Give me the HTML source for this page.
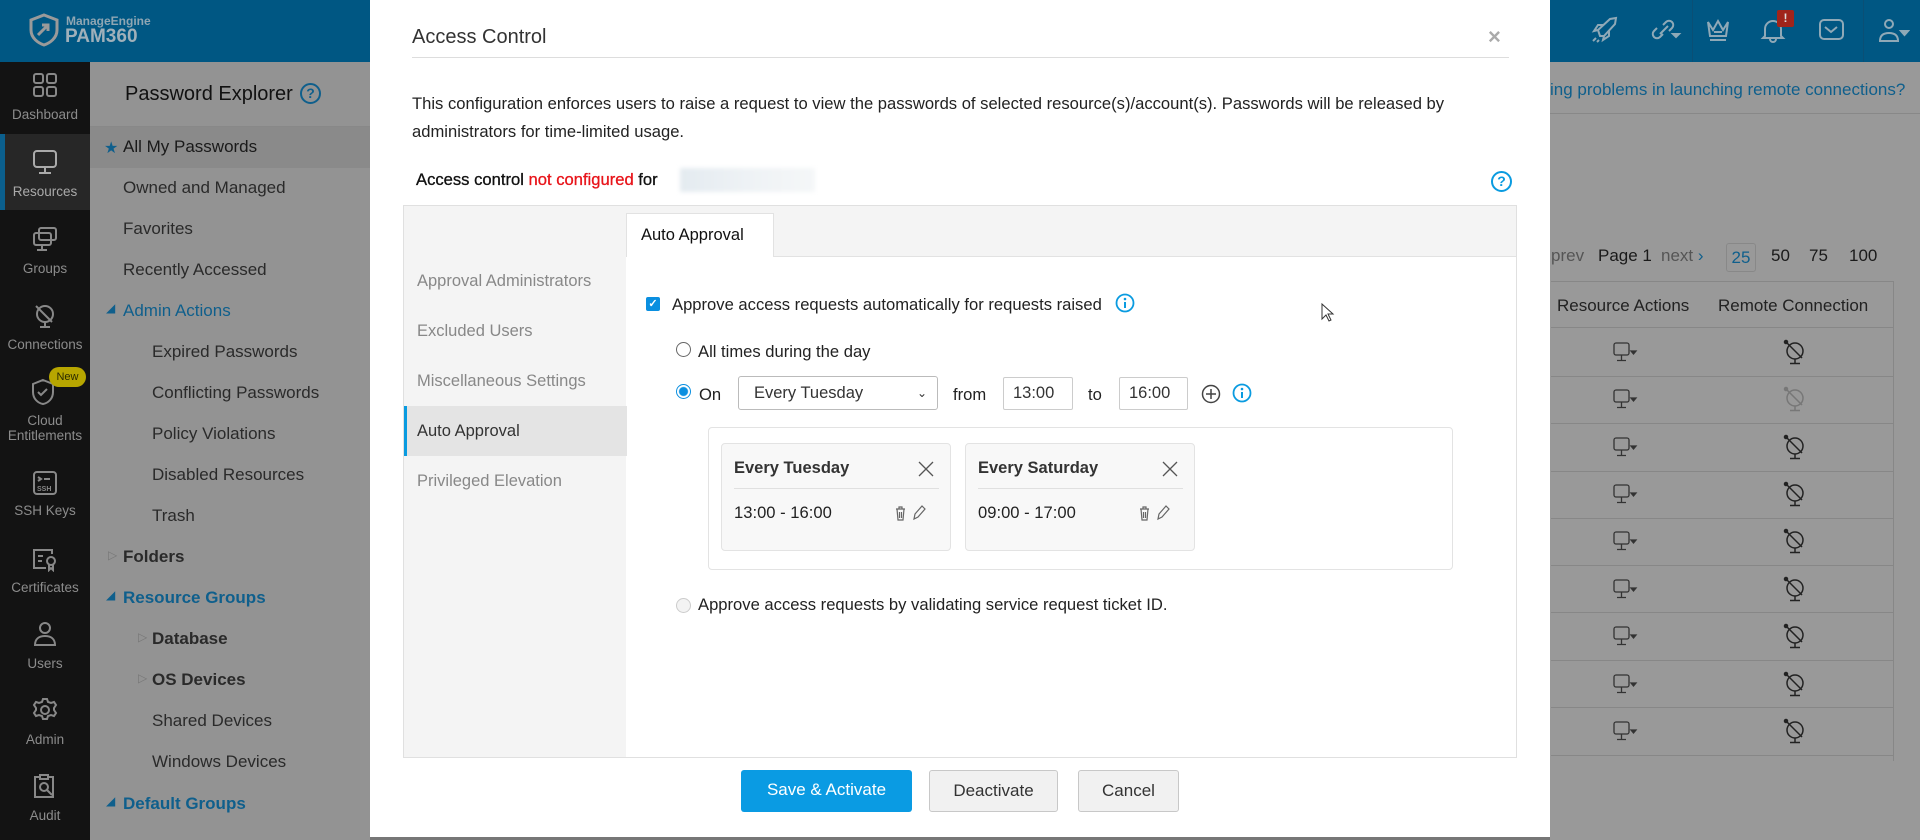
<!DOCTYPE html>
<html><head><meta charset="utf-8"><style>
*{box-sizing:border-box;margin:0;padding:0}
body{width:1920px;height:840px;overflow:hidden;position:relative;font-family:"Liberation Sans",sans-serif;background:#999}
.a{position:absolute;white-space:nowrap}
.hdr{left:0;top:0;width:1920px;height:62px;background:#005783}
.side{left:0;top:62px;width:90px;height:778px;background:#131313}
.si{position:absolute;left:0;width:90px;text-align:center;color:#8c8c8c;font-size:13.5px}
.exp{left:90px;top:62px;width:280px;height:778px;background:#939393}
.li{position:absolute;font-size:17px;color:#2a2a2a}
.bl{color:#0f5f8c}
.modal{left:370px;top:0;width:1180px;height:840px;background:#fff}
.t{color:#222;font-size:16.6px}
.nav{position:absolute;left:0;width:223px;padding-left:13px;font-size:16.5px;color:#888;height:50px;line-height:50px}
.card{position:absolute;top:443px;width:230px;height:108px;background:#f8f8f8;border:1px solid #e3e3e3;border-radius:4px}
.btn{position:absolute;top:770px;height:42px;line-height:40px;text-align:center;font-size:17px;border-radius:3px}
.row{position:absolute;left:1551px;width:343px;height:1px;background:#878787}
</style></head><body>
<div class="a hdr"></div>
<svg class="a" style="left:28px;top:13px" width="32" height="34" viewBox="0 0 32 34"><path d="M16 2 L29 7 V17 C29 25 22 30 16 32 C10 30 3 25 3 17 V7 Z" fill="none" stroke="#9a9a9a" stroke-width="3"/><path d="M10 22 L20 12 M14 12 H20 V18" fill="none" stroke="#9a9a9a" stroke-width="3"/></svg>
<div class="a" style="left:66px;top:14px;color:#8fa6b3;font-size:12px;font-weight:bold">ManageEngine</div>
<div class="a" style="left:65px;top:26px;color:#9fb0ba;font-size:19px;font-weight:bold">PAM360</div>
<div class="a side"></div>
<div class="a" style="left:0;top:134px;width:90px;height:76px;background:#272727;border-left:5px solid #0b5f8d"></div>
<div class="si" style="top:72px"><svg width="26" height="26" viewBox="0 0 26 26" fill="none" stroke="#888" stroke-width="2"><rect x="2" y="2" width="9" height="9" rx="2"/><rect x="15" y="2" width="9" height="9" rx="2"/><rect x="2" y="15" width="9" height="9" rx="2"/><rect x="15" y="15" width="9" height="9" rx="2"/></svg></div>
<div class="si" style="top:107px">Dashboard</div>
<div class="si" style="top:149px"><svg width="26" height="26" viewBox="0 0 26 26" fill="none" stroke="#aaa" stroke-width="2"><rect x="2" y="2" width="22" height="16" rx="3"/><path d="M13 18v5M7 24h12"/></svg></div>
<div class="si" style="top:184px;color:#aaa">Resources</div>
<div class="si" style="top:226px"><svg width="26" height="26" viewBox="0 0 26 26" fill="none" stroke="#888" stroke-width="2"><rect x="7" y="2" width="17" height="12" rx="2"/><rect x="2" y="7" width="17" height="12" rx="2"/><path d="M10 19v4M5 24h10"/></svg></div>
<div class="si" style="top:261px">Groups</div>
<div class="si" style="top:302px"><svg width="26" height="26" viewBox="0 0 26 26" fill="none" stroke="#888" stroke-width="2"><circle cx="13" cy="12" r="8"/><path d="M4 4l16 16M13 20v4M8 25h10"/></svg></div>
<div class="si" style="top:337px">Connections</div>
<div class="si" style="top:378px"><svg width="28" height="28" viewBox="0 0 28 28" fill="none" stroke="#888" stroke-width="2"><path d="M12 2L22 6v8c0 7-5 11-10 12C7 25 2 21 2 14V6z"/><path d="M7 14l3 3 6-6"/></svg></div>
<div class="a" style="left:49px;top:367px;width:37px;height:20px;border-radius:10px;background:#b7a600;color:#2a2a00;font-size:11px;text-align:center;line-height:20px">New</div>
<div class="si" style="top:413px;line-height:15px">Cloud<br>Entitlements</div>
<div class="si" style="top:470px"><svg width="26" height="26" viewBox="0 0 26 26" fill="none" stroke="#888" stroke-width="2"><rect x="2" y="2" width="22" height="22" rx="3"/><path d="M6 7l3 2-3 2M12 9h6"/><text x="5" y="21" font-size="7" fill="#888" stroke="none" font-family="Liberation Sans" font-weight="bold">SSH</text></svg></div>
<div class="si" style="top:503px">SSH Keys</div>
<div class="si" style="top:546px"><svg width="26" height="26" viewBox="0 0 26 26" fill="none" stroke="#888" stroke-width="2"><path d="M20 8V4H2v18h12"/><path d="M6 10h5M6 15h4"/><circle cx="19" cy="15" r="4"/><path d="M17 19v5l2-2 2 2v-5"/></svg></div>
<div class="si" style="top:580px">Certificates</div>
<div class="si" style="top:621px"><svg width="26" height="26" viewBox="0 0 26 26" fill="none" stroke="#888" stroke-width="2"><circle cx="13" cy="7" r="5"/><path d="M3 24c0-6 4-9 10-9s10 3 10 9z"/></svg></div>
<div class="si" style="top:656px">Users</div>
<div class="si" style="top:697px"><svg width="26" height="26" viewBox="0 0 26 26" fill="none" stroke="#888" stroke-width="2"><circle cx="13" cy="13" r="4"/><path d="M11 2h4l1 3 3 1 3-1 2 3-2 3v2l2 3-2 3-3-1-3 1-1 3h-4l-1-3-3-1-3 1-2-3 2-3v-2l-2-3 2-3 3 1 3-1z"/></svg></div>
<div class="si" style="top:732px">Admin</div>
<div class="si" style="top:773px"><svg width="26" height="26" viewBox="0 0 26 26" fill="none" stroke="#888" stroke-width="2"><path d="M8 4H3v20h18V4h-5"/><rect x="8" y="2" width="8" height="4"/><circle cx="12" cy="14" r="4"/><path d="M15 17l5 5"/></svg></div>
<div class="si" style="top:808px">Audit</div>

<div class="a exp"></div>
<div class="a" style="left:125px;top:83px;font-size:20px;color:#111">Password Explorer</div>
<div class="a" style="left:300px;top:83px;width:21px;height:21px;border:2px solid #0f5f8c;border-radius:50%;color:#0f5f8c;font-size:14px;text-align:center;line-height:17px;font-weight:bold">?</div>
<div class="a" style="left:90px;top:126px;width:280px;height:1px;background:#888"></div>
<div class="a" style="left:90px;top:127px;width:280px;height:41px;background:#8a8a8a"></div>
<div class="a" style="left:104px;top:138px;color:#0f5f8c;font-size:16px">&#x2605;</div>
<div class="li" style="left:123px;top:137px;color:#1a1a1a">All My Passwords</div>
<div class="li" style="left:123px;top:178px">Owned and Managed</div>
<div class="li" style="left:123px;top:219px">Favorites</div>
<div class="li" style="left:123px;top:260px">Recently Accessed</div>
<div class="li bl" style="left:106px;top:301px;font-size:12px">&#9698;</div>
<div class="li bl" style="left:123px;top:301px">Admin Actions</div>
<div class="li" style="left:152px;top:342px">Expired Passwords</div>
<div class="li" style="left:152px;top:383px">Conflicting Passwords</div>
<div class="li" style="left:152px;top:424px">Policy Violations</div>
<div class="li" style="left:152px;top:465px">Disabled Resources</div>
<div class="li" style="left:152px;top:506px">Trash</div>
<div class="li" style="left:108px;top:548px;color:#777;font-size:12px">&#9655;</div>
<div class="li" style="left:123px;top:547px;font-weight:bold">Folders</div>
<div class="li bl" style="left:106px;top:588px;font-size:12px">&#9698;</div>
<div class="li bl" style="left:123px;top:588px;font-weight:bold">Resource Groups</div>
<div class="li" style="left:138px;top:630px;color:#777;font-size:12px">&#9655;</div>
<div class="li" style="left:152px;top:629px;font-weight:bold">Database</div>
<div class="li" style="left:138px;top:671px;color:#777;font-size:12px">&#9655;</div>
<div class="li" style="left:152px;top:670px;font-weight:bold">OS Devices</div>
<div class="li" style="left:152px;top:711px">Shared Devices</div>
<div class="li" style="left:152px;top:752px">Windows Devices</div>
<div class="li bl" style="left:106px;top:794px;font-size:12px">&#9698;</div>
<div class="li bl" style="left:123px;top:794px;font-weight:bold">Default Groups</div>

<div class="a" style="left:1550px;top:80px;color:#0f5f8c;font-size:17px">ing problems in launching remote connections?</div>
<div class="a" style="left:1550px;top:113px;width:370px;height:1px;background:#888"></div>
<div class="a" style="left:1551px;top:246px;font-size:17px;color:#555">prev</div>
<div class="a" style="left:1598px;top:246px;font-size:17px;color:#1a1a1a">Page 1</div>
<div class="a" style="left:1661px;top:246px;font-size:17px;color:#555">next <span style="color:#0f5f8c">&#8250;</span></div>
<div class="a" style="left:1726px;top:243px;width:30px;height:29px;border:1px solid #888;border-radius:3px;color:#0f5f8c;font-size:17px;text-align:center;line-height:27px">25</div>
<div class="a" style="left:1771px;top:246px;font-size:17px;color:#1a1a1a">50</div>
<div class="a" style="left:1809px;top:246px;font-size:17px;color:#1a1a1a">75</div>
<div class="a" style="left:1849px;top:246px;font-size:17px;color:#1a1a1a">100</div>
<div class="row" style="top:281px"></div>
<div class="a" style="left:1893px;top:281px;width:1px;height:480px;background:#878787"></div>
<div class="a" style="left:1557px;top:296px;font-size:17px;color:#222">Resource Actions</div>
<div class="a" style="left:1718px;top:296px;font-size:17px;color:#222">Remote Connection</div>
<div class="row" style="top:327px"></div>
<div class="row" style="top:376px"></div>
<div class="row" style="top:423px"></div>
<div class="row" style="top:471px"></div>
<div class="row" style="top:518px"></div>
<div class="row" style="top:565px"></div>
<div class="row" style="top:612px"></div>
<div class="row" style="top:660px"></div>
<div class="row" style="top:707px"></div>
<div class="row" style="top:755px"></div>
<div id="icons"></div>

<div class="a" style="left:1692px;top:0;width:1px;height:62px;background:#0a4f75"></div>
<div class="a" style="left:1863px;top:0;width:1px;height:62px;background:#0a4f75"></div>
<svg class="a" style="left:1590px;top:16px" width="30" height="28" viewBox="0 0 30 28" fill="none" stroke="#8fa9b7" stroke-width="2"><path d="M10 20L8 14 20 3 26 2 25 8 14 20z M8 14l-4 1 4-6 6 0 M14 20l-1 4 6-4 0-6 M6 22l-3 3 M9 24l-2 2"/></svg>
<svg class="a" style="left:1648px;top:16px" width="34" height="28" viewBox="0 0 34 28" fill="none" stroke="#8fa9b7" stroke-width="2"><path d="M12 18l8-8 M9 12l-3 3a4 4 0 006 6l3-3 M15 9l3-3a4 4 0 016 6l-3 3"/><path d="M25 18h6l-3 3z" fill="#8fa9b7"/></svg>
<svg class="a" style="left:1705px;top:16px" width="26" height="28" viewBox="0 0 26 28" fill="none" stroke="#8fa9b7" stroke-width="2"><path d="M3 6l5 8 5-9 5 9 5-8-2 14H5z M9 16h8 M5 24h16"/></svg>
<svg class="a" style="left:1760px;top:16px" width="26" height="28" viewBox="0 0 26 28" fill="none" stroke="#8fa9b7" stroke-width="2"><path d="M5 20V13a8 8 0 0116 0v7l2 2H3z M10 23a3 3 0 006 0"/></svg>
<div class="a" style="left:1777px;top:10px;width:17px;height:17px;background:#a0241a;border-radius:2px;color:#ddd;font-size:12px;font-weight:bold;text-align:center;line-height:17px">!</div>
<svg class="a" style="left:1818px;top:18px" width="28" height="24" viewBox="0 0 28 24" fill="none" stroke="#8fa9b7" stroke-width="2"><rect x="2" y="2" width="23" height="19" rx="4"/><path d="M7 9l6 5 6-5"/></svg>
<svg class="a" style="left:1878px;top:18px" width="32" height="26" viewBox="0 0 32 26" fill="none" stroke="#8fa9b7" stroke-width="2"><circle cx="11" cy="6" r="4"/><path d="M2 23c0-6 4-8 9-8s9 2 9 8z"/><path d="M23 13h7l-3.5 4z" fill="#8fa9b7"/></svg>

<div class="a modal"></div>
<div class="a" style="left:412px;top:26px;font-size:20px;color:#333">Access Control</div>
<div class="a" style="left:1488px;top:24px;font-size:22px;color:#aaa;font-weight:bold">&#215;</div>
<div class="a" style="left:412px;top:57px;width:1097px;height:1px;background:#ddd"></div>
<div class="a t" style="left:412px;top:94px">This configuration enforces users to raise a request to view the passwords of selected resource(s)/account(s). Passwords will be released by</div>
<div class="a t" style="left:412px;top:122px">administrators for time-limited usage.</div>
<div class="a t" style="left:416px;top:170px;color:#111;-webkit-text-stroke:0.3px #111">Access control <span style="color:#e8141a;-webkit-text-stroke:0.3px #e8141a">not configured</span> for</div>
<div class="a" style="left:680px;top:168px;width:135px;height:24px;background:linear-gradient(90deg,#e4ebf0,#eef2f5,#f5f7f8);filter:blur(2px)"></div>
<div class="a" style="left:1491px;top:171px;width:21px;height:21px;border:2px solid #0a9be0;border-radius:50%;color:#0a9be0;font-size:14px;text-align:center;line-height:17px;font-weight:bold">?</div>

<div class="a" style="left:403px;top:205px;width:1114px;height:553px;background:#f4f4f4;border:1px solid #e0e0e0"></div>
<div class="a" style="left:626px;top:256px;width:890px;height:501px;background:#fff;border-top:1px solid #e2e2e2"></div>
<div class="a" style="left:626px;top:213px;width:148px;height:44px;background:#fff;border:1px solid #e2e2e2;border-bottom:none;font-size:16.5px;color:#111;line-height:42px;padding-left:14px">Auto Approval</div>
<div class="a" style="left:404px;top:0;width:222px">
 <div class="nav" style="top:256px">Approval Administrators</div>
 <div class="nav" style="top:306px">Excluded Users</div>
 <div class="nav" style="top:356px">Miscellaneous Settings</div>
 <div class="nav" style="top:406px;background:#e4e4e4;border-left:3px solid #0a9be0;padding-left:10px;color:#333">Auto Approval</div>
 <div class="nav" style="top:456px">Privileged Elevation</div>
</div>

<div class="a" style="left:646px;top:297px;width:14px;height:14px;background:#0a8fe0;border-radius:2px;color:#fff;font-size:11px;text-align:center;line-height:14px;font-weight:bold">&#10003;</div>
<div class="a t" style="left:672px;top:295px">Approve access requests automatically for requests raised</div>
<svg class="a" style="left:1115px;top:293px" width="20" height="20" viewBox="0 0 20 20"><circle cx="10" cy="10" r="8.5" fill="none" stroke="#0a9be0" stroke-width="1.8"/><circle cx="10" cy="6" r="1.3" fill="#0a9be0"/><path d="M10 9v6" stroke="#0a9be0" stroke-width="2"/></svg>
<div class="a" style="left:676px;top:342px;width:15px;height:15px;border:1px solid #666;border-radius:50%"></div>
<div class="a t" style="left:698px;top:342px">All times during the day</div>
<div class="a" style="left:676px;top:384px;width:15px;height:15px;border:1px solid #0a8fe0;border-radius:50%;background:radial-gradient(circle,#0a8fe0 4px,#fff 5px)"></div>
<div class="a t" style="left:699px;top:385px">On</div>
<div class="a" style="left:738px;top:376px;width:200px;height:34px;border:1px solid #bbb;border-radius:3px;font-size:16.5px;color:#333;line-height:32px;padding-left:15px">Every Tuesday<span style="position:absolute;right:10px;top:0;font-size:12px">&#8964;</span></div>
<div class="a t" style="left:953px;top:385px">from</div>
<div class="a" style="left:1003px;top:377px;width:70px;height:33px;border:1px solid #ccc;border-radius:2px;font-size:16.5px;color:#333;line-height:31px;padding-left:9px">13:00</div>
<div class="a t" style="left:1088px;top:385px">to</div>
<div class="a" style="left:1119px;top:377px;width:69px;height:33px;border:1px solid #ccc;border-radius:2px;font-size:16.5px;color:#333;line-height:31px;padding-left:9px">16:00</div>
<svg class="a" style="left:1201px;top:384px" width="20" height="20" viewBox="0 0 20 20" fill="none" stroke="#444" stroke-width="1.5"><circle cx="10" cy="10" r="8.5"/><path d="M10 5v10M5 10h10"/></svg>
<svg class="a" style="left:1232px;top:383px" width="20" height="20" viewBox="0 0 20 20"><circle cx="10" cy="10" r="8.5" fill="none" stroke="#0a9be0" stroke-width="1.8"/><circle cx="10" cy="6" r="1.3" fill="#0a9be0"/><path d="M10 9v6" stroke="#0a9be0" stroke-width="2"/></svg>

<div class="a" style="left:708px;top:427px;width:745px;height:143px;border:1px solid #e3e3e3;border-radius:4px"></div>
<div class="card" style="left:721px"></div>
<div class="card" style="left:965px"></div>
<div class="a" style="left:734px;top:459px;font-size:16.5px;font-weight:bold;color:#333">Every Tuesday</div>
<div class="a" style="left:978px;top:459px;font-size:16.5px;font-weight:bold;color:#333">Every Saturday</div>
<svg class="a" style="left:917px;top:460px" width="18" height="18" viewBox="0 0 18 18" stroke="#555" stroke-width="1.3"><path d="M2 2l14 14M16 2L2 16"/></svg>
<svg class="a" style="left:1161px;top:460px" width="18" height="18" viewBox="0 0 18 18" stroke="#555" stroke-width="1.3"><path d="M2 2l14 14M16 2L2 16"/></svg>
<div class="a" style="left:734px;top:488px;width:205px;height:1px;background:#e0e0e0"></div>
<div class="a" style="left:978px;top:488px;width:205px;height:1px;background:#e0e0e0"></div>
<div class="a t" style="left:734px;top:503px">13:00 - 16:00</div>
<div class="a t" style="left:978px;top:503px">09:00 - 17:00</div>
<svg class="a" style="left:893px;top:504px" width="40" height="18" viewBox="0 0 40 18" fill="none" stroke="#666" stroke-width="1.2"><path d="M3 5h9M6 5V3h3v2M4 5l1 11h5l1-11M6.5 8v6M8.5 8v6"/><path d="M21 15l1-5 7-8 3 3-7 8z"/></svg>
<svg class="a" style="left:1137px;top:504px" width="40" height="18" viewBox="0 0 40 18" fill="none" stroke="#666" stroke-width="1.2"><path d="M3 5h9M6 5V3h3v2M4 5l1 11h5l1-11M6.5 8v6M8.5 8v6"/><path d="M21 15l1-5 7-8 3 3-7 8z"/></svg>

<div class="a" style="left:676px;top:598px;width:15px;height:15px;border:1px solid #ccc;border-radius:50%;background:#f3f3f3"></div>
<div class="a t" style="left:698px;top:595px">Approve access requests by validating service request ticket ID.</div>
<svg class="a" style="left:1321px;top:303px" width="14" height="20" viewBox="0 0 14 20"><path d="M1 1v15l4-4 3 6 2-1-3-6h5z" fill="#fff" stroke="#333"/></svg>

<div class="btn" style="left:741px;width:171px;background:#0a9be3;color:#fff">Save &amp; Activate</div>
<div class="btn" style="left:929px;width:129px;background:#f1f1f1;border:1px solid #c8c8c8;color:#333">Deactivate</div>
<div class="btn" style="left:1078px;width:101px;background:#f1f1f1;border:1px solid #c8c8c8;color:#333">Cancel</div>
<div class="a" style="left:370px;top:837px;width:1180px;height:3px;background:#777"></div>
<script>
var h='';[352,399,447,494,541,589,636,684,731].forEach(function(y,i){
h+='<svg class="a" style="left:1612px;top:'+(y-11)+'px" width="26" height="22" viewBox="0 0 26 22" fill="none" stroke="#333" stroke-width="1.3"><rect x="2" y="2" width="15" height="12" rx="2"/><path d="M9.5 14v5M5 19.5h9"/><path d="M19 10h5l-2.5 3z" fill="#333"/></svg>';
var c=i==1?'#777':'#222';
h+='<svg class="a" style="left:1783px;top:'+(y-13)+'px" width="24" height="26" viewBox="0 0 24 26" fill="none" stroke="'+c+'" stroke-width="1.5"><circle cx="12" cy="12" r="8"/><path d="M3 3l16 16M12 20v4M7 24.5h10"/><circle cx="3" cy="3" r="1.5" fill="'+c+'"/></svg>';});
document.getElementById('icons').innerHTML=h;
</script>
</body></html>
